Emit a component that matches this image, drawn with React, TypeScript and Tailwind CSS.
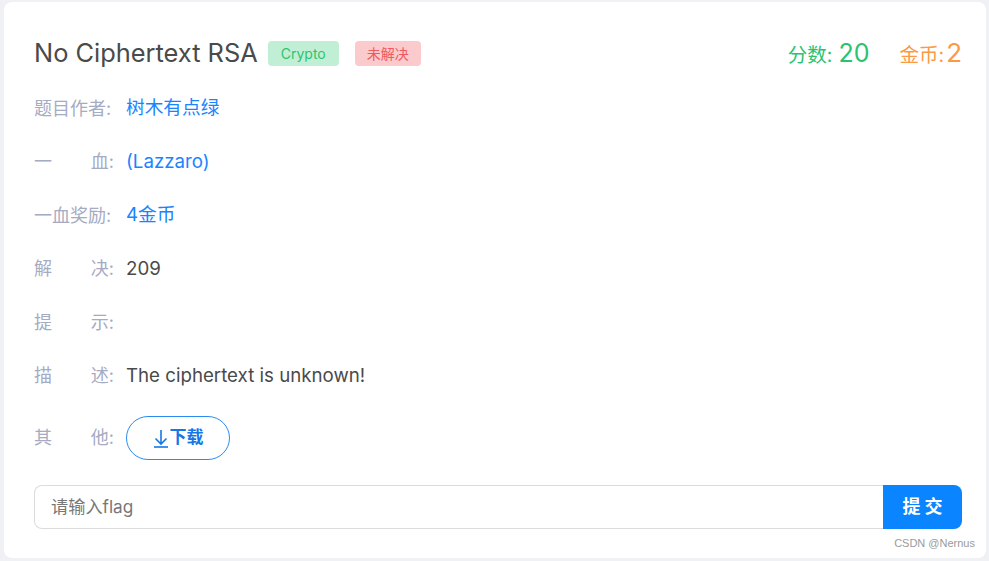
import React from "react";

const font = { fontFamily: '"Inter", "Noto Sans CJK SC", sans-serif' };

function Label({ parts }: { parts: string[] }) {
  return (
    <div className="w-[80px] flex justify-between text-[18px] text-[#a5abc2] shrink-0">
      {parts.map((p, i) => (
        <span key={i}>{p}</span>
      ))}
    </div>
  );
}

function Row({ parts, children }: { parts: string[]; children?: React.ReactNode }) {
  return (
    <div className="flex items-center h-[34px]">
      <Label parts={parts} />
      <div className="ml-[12px] text-[18.7px]">{children}</div>
    </div>
  );
}

export default function App() {
  return (
    <div className="w-[989px] h-[561px] bg-[#eff1f4] pt-[2px] pl-[4px] pr-[3px] overflow-hidden" style={font}>
      <div className="relative bg-white rounded-[8px] h-[556px] pl-[30px] pr-[24px] pt-[31px]">
        <div className="flex items-center h-[40px]">
          <div className="text-[25.4px] text-[#4a4a4a] leading-none">No Ciphertext RSA</div>
          <div className="ml-[10px] h-[25px] w-[71px] rounded-[4px] bg-[#c1efd6] text-[#2fc370] text-[14px] flex items-center justify-center">Crypto</div>
          <div className="ml-[16px] h-[25px] w-[66px] rounded-[4px] bg-[#fbcacc] text-[#ee5a60] text-[14px] flex items-center justify-center">未解决</div>
          <div className="ml-auto flex items-baseline">
            <span className="text-[19.5px] text-[#2cc270]">分数:</span>
            <span className="ml-[6px] text-[25px] text-[#2cc270]">20</span>
            <span className="ml-[30px] text-[19.5px] text-[#fb9a43]">金币:</span>
            <span className="ml-[2px] text-[26px] text-[#fb9a43]">2</span>
          </div>
        </div>
        <div className="mt-[18px] flex flex-col gap-[19.6px]">
          <Row parts={["题目作者:"]}>
            <span className="text-[#1a84ff]">树木有点绿</span>
          </Row>
          <Row parts={["一", "血:"]}>
            <span className="text-[#1a84ff]">(Lazzaro)</span>
          </Row>
          <Row parts={["一血奖励:"]}>
            <span className="text-[#1a84ff]">4金币</span>
          </Row>
          <Row parts={["解", "决:"]}>
            <span className="text-[#4a4a4a]">209</span>
          </Row>
          <Row parts={["提", "示:"]} />
          <Row parts={["描", "述:"]}>
            <span className="text-[#4a4a4a]">The ciphertext is unknown!</span>
          </Row>
        </div>
        <div className="mt-[23px] flex items-center h-[44px]">
          <Label parts={["其", "他:"]} />
          <button className="ml-[12px] w-[104px] h-[44px] rounded-full border border-[#2a8cf0] flex items-center justify-center text-[#1677e6] font-bold text-[17px]">
            <svg width="16" height="20" viewBox="0 0 16 20" className="mr-[1px]">
              <path d="M8 2 V16 M2.5 10.5 L8 16 L13.5 10.5" fill="none" stroke="#1677e6" strokeWidth="1.6" />
              <path d="M1 19 H15" stroke="#1677e6" strokeWidth="1.6" />
            </svg>
            <span>下载</span>
          </button>
        </div>
        <div className="mt-[25px] flex h-[44px]">
          <div className="flex-1 border border-[#dcdcdc] border-r-0 rounded-l-[8px] flex items-center pl-[16px] text-[17.2px] text-[#777]">
            请输入flag
          </div>
          <button className="w-[79px] h-[44px] bg-[#0a84ff] rounded-r-[8px] text-white font-bold text-[18px] tracking-[4px] pl-[4px]">
            提交
          </button>
        </div>
        <div
          className="absolute right-[11px] bottom-[7px] text-[11px] text-[#9a9a9a]"
          style={{ fontFamily: '"Liberation Sans", sans-serif' }}
        >
          CSDN @Nernus
        </div>
      </div>
    </div>
  );
}
